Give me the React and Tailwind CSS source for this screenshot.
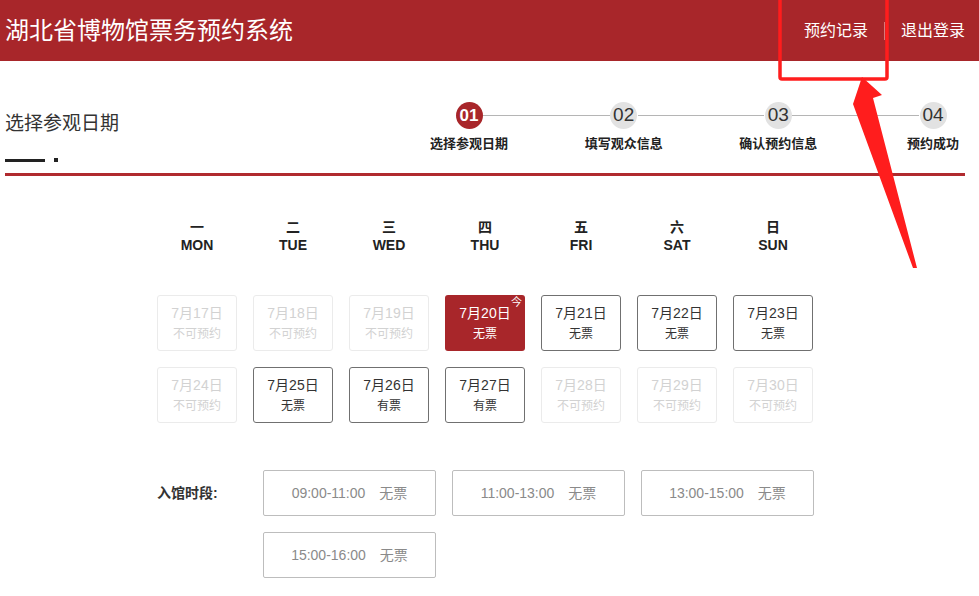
import React from "react";

const weekdays = [
  ["一", "MON"],
  ["二", "TUE"],
  ["三", "WED"],
  ["四", "THU"],
  ["五", "FRI"],
  ["六", "SAT"],
  ["日", "SUN"],
];

// state: off = 不可预约, open = bookable, today = selected
const dates = [
  { d: "7月17日", s: "不可预约", t: "off" },
  { d: "7月18日", s: "不可预约", t: "off" },
  { d: "7月19日", s: "不可预约", t: "off" },
  { d: "7月20日", s: "无票", t: "today" },
  { d: "7月21日", s: "无票", t: "open" },
  { d: "7月22日", s: "无票", t: "open" },
  { d: "7月23日", s: "无票", t: "open" },
  { d: "7月24日", s: "不可预约", t: "off" },
  { d: "7月25日", s: "无票", t: "open" },
  { d: "7月26日", s: "有票", t: "open" },
  { d: "7月27日", s: "有票", t: "open" },
  { d: "7月28日", s: "不可预约", t: "off" },
  { d: "7月29日", s: "不可预约", t: "off" },
  { d: "7月30日", s: "不可预约", t: "off" },
];

const slots = ["09:00-11:00", "11:00-13:00", "13:00-15:00", "15:00-16:00"];

const steps = ["选择参观日期", "填写观众信息", "确认预约信息", "预约成功"];

const font = { fontFamily: '"Liberation Sans", "Noto Sans CJK SC", sans-serif' };

const DateCell = ({ item }) => {
  if (item.t === "today") {
    return (
      <div className="relative h-[56px] rounded-[3px] bg-[#a8262a] text-white flex flex-col items-center justify-center">
        <span className="text-[14px] leading-[18px]">{item.d}</span>
        <span className="text-[12px] leading-[16px] mt-[4px]">{item.s}</span>
        <span className="absolute right-[3px] top-[1px] text-[11px] leading-[12px]">今</span>
      </div>
    );
  }
  const off = item.t === "off";
  return (
    <div
      className={
        off
          ? "h-[56px] rounded-[3px] border border-[#ebebeb] text-[#d2d2d2] flex flex-col items-center justify-center"
          : "h-[56px] rounded-[3px] border border-[#707070] text-[#333] flex flex-col items-center justify-center"
      }
    >
      <span className="text-[14px] leading-[18px]">{item.d}</span>
      <span className="text-[12px] leading-[16px] mt-[4px]">{item.s}</span>
    </div>
  );
};

export default function App() {
  return (
    <div className="relative w-[979px] h-[596px] bg-white overflow-hidden" style={font}>
      {/* header */}
      <div className="h-[61px] bg-[#a8262a] flex items-center justify-between pl-[5px] pr-[14px] text-white">
        <h1 className="text-[24px] leading-[30px]">湖北省博物馆票务预约系统</h1>
        <div className="flex items-center text-[16px]">
          <span>预约记录</span>
          <span className="mx-[16px] w-px h-[18px] bg-[#d87a7c]"></span>
          <span>退出登录</span>
        </div>
      </div>

      {/* step header */}
      <div className="flex justify-between px-[5px]">
        <div className="pt-[50px]">
          <h2 className="text-[19px] leading-[26px] text-[#333]">选择参观日期</h2>
          <div className="flex items-center mt-[21px]">
            <span className="w-[40px] h-[3px] bg-[#222]"></span>
            <span className="ml-[9px] w-[4px] h-[4px] bg-[#222]"></span>
          </div>
        </div>
        <div className="flex w-[490px] mt-[41px] mr-[28px]">
          {steps.map((s, i) => (
            <React.Fragment key={s}>
              {i > 0 && <div className="flex-1 h-px bg-[#b5b5b5] mt-[13px] mx-[1px]"></div>}
              <div className="w-[26px] flex flex-col items-center">
                <div
                  className={
                    i === 0
                      ? "w-[27px] h-[27px] rounded-full bg-[#a8262a] text-white font-bold text-[17px] flex items-center justify-center"
                      : "w-[27px] h-[27px] rounded-full bg-[#e2e2e2] text-[#333] text-[19px] flex items-center justify-center"
                  }
                >
                  {"0" + (i + 1)}
                </div>
                <div className="whitespace-nowrap mt-[7px] text-[13px] leading-[16px] font-bold text-[#222]">{s}</div>
              </div>
            </React.Fragment>
          ))}
        </div>
      </div>

      <div className="mx-[5px] w-[960px] h-[3px] bg-[#b02a2e] mt-[11px]"></div>

      {/* calendar */}
      <div className="ml-[157px] w-[656px] mt-[42px]">
        <div className="grid grid-cols-7 gap-x-[16px]">
          {weekdays.map(([c, e]) => (
            <div key={e} className="flex flex-col items-center font-bold text-[#222]">
              <span className="text-[14px] leading-[18px]">{c}</span>
              <span className="text-[14px] leading-[18px]">{e}</span>
            </div>
          ))}
        </div>
        <div className="grid grid-cols-7 gap-[16px] mt-[41px]">
          {dates.map((item) => (
            <DateCell key={item.d} item={item} />
          ))}
        </div>
      </div>

      {/* time slots */}
      <div className="flex ml-[157px] mt-[47px]">
        <div className="w-[106px] pt-[14px] text-[14px] leading-[18px] font-bold text-[#333]">入馆时段:</div>
        <div className="grid grid-cols-3 gap-x-[16px] gap-y-[16px] w-[551px]">
          {slots.map((s) => (
            <div
              key={s}
              className="h-[46px] rounded-[2px] border border-[#bdbdbd] flex items-center justify-center text-[14px] text-[#8a8a8a]"
            >
              <span>{s}</span>
              <span className="ml-[14px]">无票</span>
            </div>
          ))}
        </div>
      </div>

      {/* annotation overlay */}
      <svg className="absolute inset-0 pointer-events-none" width="979" height="596" viewBox="0 0 979 596">
        <rect x="780" y="-3" width="107" height="82" rx="2" fill="none" stroke="#ff1d1d" strokeWidth="3.5" />
        <polygon points="862,77 882,95 873,98 917,268 913,268 853,104" fill="#ff1d1d" />
      </svg>
    </div>
  );
}
